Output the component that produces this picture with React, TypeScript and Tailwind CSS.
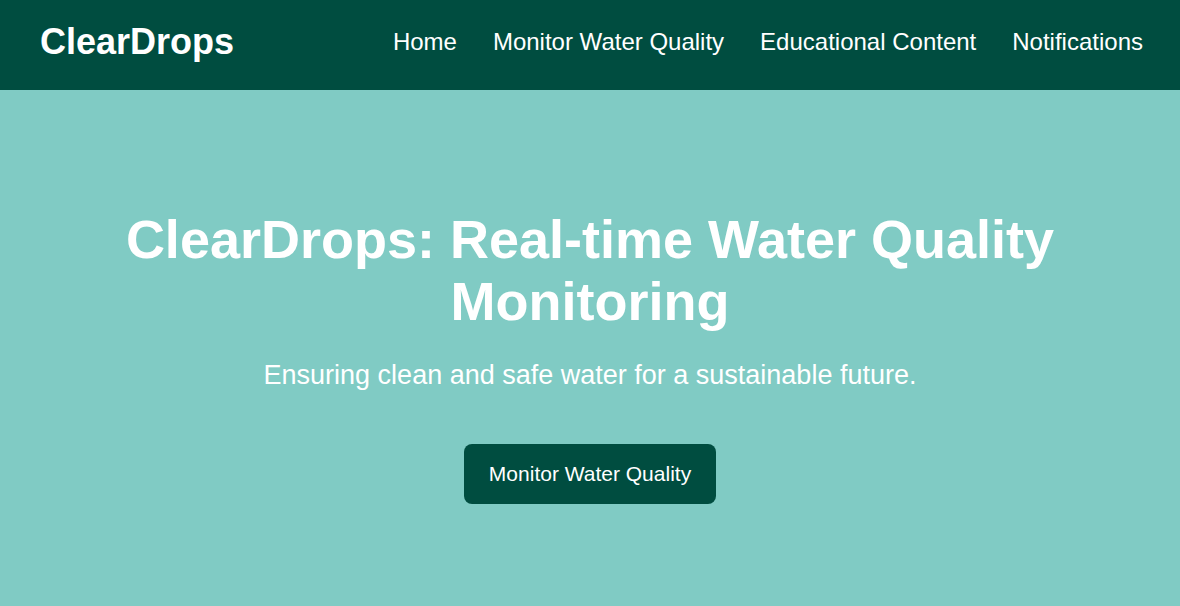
import React from "react";

export default function App() {
  return (
    <div className="min-h-[606px] bg-[#80cbc4] text-white" style={{ fontFamily: '"Liberation Sans", Arial, sans-serif' }}>
      <header className="h-[90px] bg-[#004d40] flex items-center justify-between pl-[40px] pr-[37px] pb-[7px]">
        <h1 className="text-[36px] leading-[42px] font-bold">ClearDrops</h1>
        <nav className="flex gap-[36px] text-[24px] leading-[28px]">
          <a>Home</a>
          <a>Monitor Water Quality</a>
          <a>Educational Content</a>
          <a>Notifications</a>
        </nav>
      </header>
      <section className="flex flex-col items-center text-center px-[40px] pt-[118px] pb-[100px]">
        <h2 className="text-[54px] leading-[62px] font-bold">ClearDrops: Real-time Water Quality Monitoring</h2>
        <p className="mt-[28px] text-[27px] leading-[31px]">Ensuring clean and safe water for a sustainable future.</p>
        <button className="mt-[53px] h-[60px] px-[25px] rounded-[8px] bg-[#004d40] text-white text-[21px] leading-[24px]">
          Monitor Water Quality
        </button>
      </section>
    </div>
  );
}
